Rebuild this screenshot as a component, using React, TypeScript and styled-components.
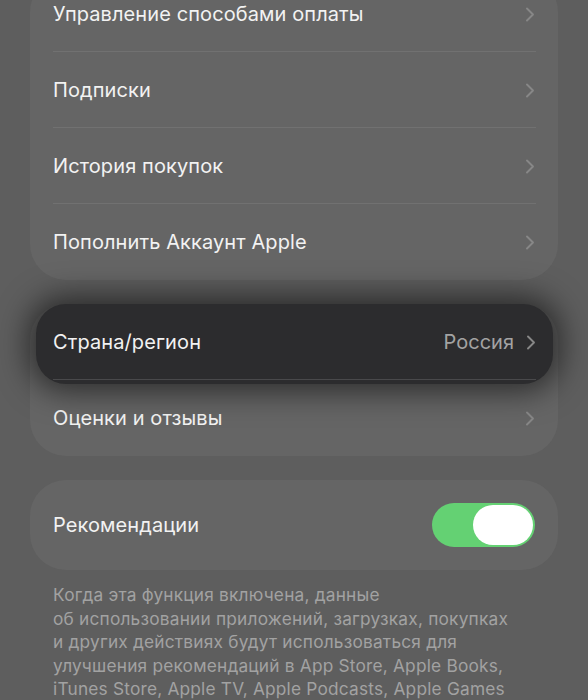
import styled, { createGlobalStyle } from 'styled-components';

const GlobalStyle = createGlobalStyle`
	html, body {
		margin: 0;
		padding: 0;
		background: #5e5e5e;
		overflow: hidden;
	}
	body {
		font-family: Inter, 'Noto Sans', sans-serif;
		-webkit-font-smoothing: antialiased;
	}
`;

type RowData = { label: string; value?: string; lifted?: boolean };

const paymentRows: RowData[] = [
	{ label: 'Управление способами оплаты' },
	{ label: 'Подписки' },
	{ label: 'История покупок' },
	{ label: 'Пополнить Аккаунт Apple' },
];

const regionRows: RowData[] = [
	{ label: 'Страна/регион', value: 'Россия', lifted: true },
	{ label: 'Оценки и отзывы' },
];

const footerText = `Когда эта функция включена, данные
об использовании приложений, загрузках, покупках
и других действиях будут использоваться для
улучшения рекомендаций в App Store, Apple Books,
iTunes Store, Apple TV, Apple Podcasts, Apple Games`;

const Chevron = () => (
	<svg width="10" height="15" viewBox="0 0 10 15" fill="none">
		<path d="M2 1.5L8 7.5L2 13.5" stroke="#878787" strokeWidth="1.9" strokeLinecap="round" strokeLinejoin="round" />
	</svg>
);

const ListRow = ({ label, value, lifted }: RowData) => (
	<Row $lifted={lifted}>
		<Label>{label}</Label>
		<Right>
			{value && <Value>{value}</Value>}
			<Chevron />
		</Right>
	</Row>
);

export default function App() {
	return (
		<>
			<GlobalStyle />
			<Page>
				<Card>
					{paymentRows.map((r) => (
						<ListRow key={r.label} {...r} />
					))}
				</Card>
				<Card>
					{regionRows.map((r) => (
						<ListRow key={r.label} {...r} />
					))}
				</Card>
				<Card>
					<ToggleRow>
						<Label>Рекомендации</Label>
						<Switch>
							<Knob />
						</Switch>
					</ToggleRow>
				</Card>
				<Footer>{footerText}</Footer>
			</Page>
		</>
	);
}

const Page = styled.div`
	display: flex;
	flex-direction: column;
	gap: 24px;
	padding: 0 30px;
	margin-top: -24px;
`;

const Card = styled.div`
	display: flex;
	flex-direction: column;
	background: #656565;
	border-radius: 36px;
`;

const Row = styled.div<{ $lifted?: boolean }>`
	position: relative;
	display: flex;
	align-items: center;
	justify-content: space-between;
	height: 76px;
	box-sizing: border-box;
	padding: 0 23px;

	&:not(:last-child)::after {
		content: '';
		position: absolute;
		left: 23px;
		right: 22px;
		bottom: 0;
		height: 1px;
		background: rgba(255, 255, 255, 0.08);
	}

	${(props) =>
		props.$lifted &&
		`
		z-index: 1;
		margin: 0 5px -4px 6px;
		padding: 0 17px 4px 17px;
		height: 80px;
		background: #2c2c2e;
		border-radius: 30px;
		box-shadow: 0 0 30px 8px rgba(0, 0, 0, 0.55);
		&:not(:last-child)::after {
			left: 17px;
			right: 17px;
			bottom: 4px;
			background: rgba(255, 255, 255, 0.14);
		}
	`}
`;

const Label = styled.span`
	font-size: 20px;
	color: #f2f2f2;
	letter-spacing: 0.1px;
`;

const Right = styled.div`
	display: flex;
	align-items: center;
	gap: 12px;
`;

const Value = styled.span`
	font-size: 20px;
	color: #a3a3a3;
`;

const ToggleRow = styled.div`
	display: flex;
	align-items: center;
	justify-content: space-between;
	height: 90px;
	padding: 0 23px;
`;

const Switch = styled.div`
	display: flex;
	align-items: center;
	justify-content: flex-end;
	width: 103px;
	height: 44px;
	box-sizing: border-box;
	padding: 2px;
	border-radius: 22px;
	background: #64d173;
`;

const Knob = styled.div`
	width: 60px;
	height: 40px;
	border-radius: 20px;
	background: #ffffff;
`;

const Footer = styled.div`
	margin-top: -11px;
	padding: 0 23px;
	font-size: 17.3px;
	line-height: 23.5px;
	color: #a2a2a2;
	white-space: pre-line;
	letter-spacing: 0.2px;
`;
